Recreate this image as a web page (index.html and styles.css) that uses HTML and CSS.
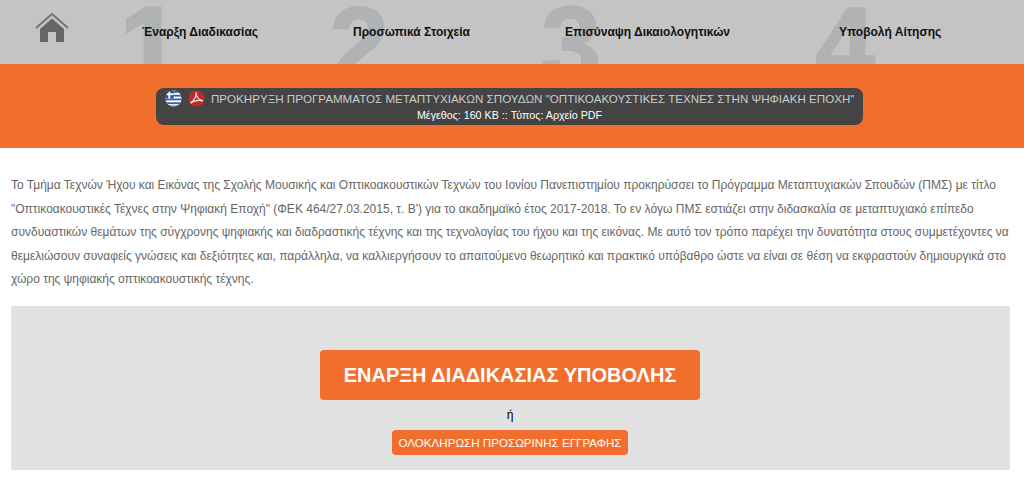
FILE: index.html
```html
<!doctype html>
<html lang="el">
<head>
    <meta charset="UTF-8"/>
    <title>Έναρξη Διαδικασίας</title>
    <link rel="stylesheet" href="styles.css">
</head>
<body>
<nav class="steps">
    <a class="home" href="#">
        <svg width="34" height="30" viewBox="0 0 34 30">
            <path d="M1 15 L17 1 L33 15" fill="none" stroke="#777" stroke-width="2"/>
            <path d="M5 16 L17 5.500 L29 16 V29 H21 V19 H13 V29 H5 Z" fill="#666"/>
        </svg>
    </a>
    <div class="step"><span class="step-num step-num-first">1</span><span class="step-label">Έναρξη Διαδικασίας</span></div>
    <div class="step"><span class="step-num">2</span><span class="step-label">Προσωπικά Στοιχεία</span></div>
    <div class="step"><span class="step-num">3</span><span class="step-label">Επισύναψη Δικαιολογητικών</span></div>
    <div class="step"><span class="step-num">4</span><span class="step-label">Υποβολή Αίτησης</span></div>
</nav>

<div class="banner">
    <div class="doc-pill">
        <div class="doc-title">
            <svg class="doc-icon" width="17" height="17" viewBox="0 0 18 18">
                <defs><clipPath id="flag-clip"><circle cx="9" cy="9" r="8.500"/></clipPath></defs>
                <g clip-path="url(#flag-clip)">
                    <rect width="18" height="18" fill="#fff"/>
                    <rect y="1" width="18" height="2" fill="#3c5fa8"/>
                    <rect y="5" width="18" height="2" fill="#3c5fa8"/>
                    <rect y="9" width="18" height="2" fill="#3c5fa8"/>
                    <rect y="13" width="18" height="2" fill="#3c5fa8"/>
                    <rect y="16.500" width="18" height="2" fill="#3c5fa8"/>
                    <rect width="9" height="9" fill="#2f4f9a"/>
                    <rect x="3.500" width="2" height="9" fill="#fff"/>
                    <rect y="3.500" width="9" height="2" fill="#fff"/>
                </g>
            </svg>
            <svg class="doc-icon" width="17" height="17" viewBox="0 0 18 18">
                <circle cx="9" cy="9" r="8.500" fill="#c22a26"/>
                <path d="M2.500 14 C6.500 11 9 6.500 8.500 2.500 C8.500 7 11 10.500 16 11.500 C11 10.500 6.500 11 2.500 14 Z" fill="none" stroke="#fbeaea" stroke-width="1.200"/>
            </svg>
            <span>ΠΡΟΚΗΡΥΞΗ ΠΡΟΓΡΑΜΜΑΤΟΣ ΜΕΤΑΠΤΥΧΙΑΚΩΝ ΣΠΟΥΔΩΝ "ΟΠΤΙΚΟΑΚΟΥΣΤΙΚΕΣ ΤΕΧΝΕΣ ΣΤΗΝ ΨΗΦΙΑΚΗ ΕΠΟΧΗ"</span>
        </div>
        <div class="doc-meta">Μέγεθος: 160 KB :: Τύπος: Αρχείο PDF</div>
    </div>
</div>

<p class="intro">Το Τμήμα Τεχνών Ήχου και Εικόνας της Σχολής Μουσικής και Οπτικοακουστικών Τεχνών του Ιονίου Πανεπιστημίου προκηρύσσει το Πρόγραμμα Μεταπτυχιακών Σπουδών (ΠΜΣ) με τίτλο "Οπτικοακουστικές Τέχνες στην Ψηφιακή Εποχή" (ΦΕΚ 464/27.03.2015, τ. Β') για το ακαδημαϊκό έτος 2017-2018. Το εν λόγω ΠΜΣ εστιάζει στην διδασκαλία σε μεταπτυχιακό επίπεδο συνδυαστικών θεμάτων της σύγχρονης ψηφιακής και διαδραστικής τέχνης και της τεχνολογίας του ήχου και της εικόνας. Με αυτό τον τρόπο παρέχει την δυνατότητα στους συμμετέχοντες να θεμελιώσουν συναφείς γνώσεις και δεξιότητες και, παράλληλα, να καλλιεργήσουν το απαιτούμενο θεωρητικό και πρακτικό υπόβαθρο ώστε να είναι σε θέση να εκφραστούν δημιουργικά στο χώρο της ψηφιακής οπτικοακουστικής τέχνης.</p>

<div class="actions">
    <a class="btn btn-large" href="#">ΕΝΑΡΞΗ ΔΙΑΔΙΚΑΣΙΑΣ ΥΠΟΒΟΛΗΣ</a>
    <div class="or">ή</div>
    <a class="btn btn-small" href="#">ΟΛΟΚΛΗΡΩΣΗ ΠΡΟΣΩΡΙΝΗΣ ΕΓΓΡΑΦΗΣ</a>
</div>
</body>
</html>
```

FILE: styles.css
```css
body {
    margin: 0;
    font-family: "Liberation Sans", Arial, sans-serif;
    color: #666;
    background: #fff;
}

.steps {
    display: grid;
    grid-template-columns: 142px 211px 212px 274px 1fr;
    height: 64px;
    background: #c4c4c4;
    overflow: hidden;
}

.home {
    padding: 13px 0 0 35px;
}

.step {
    position: relative;
    padding-top: 22px;
}

.step-num {
    position: absolute;
    top: -9px;
    left: -24px;
    font-size: 108px;
    line-height: 108px;
    font-weight: bold;
    color: #b0b2b3;
    -webkit-text-stroke: 1.500px #b0b2b3;
}

.step-num-first {
    left: -22px;
    -webkit-text-stroke-width: 3px;
}

.step-label {
    position: relative;
    font-size: 12px;
    line-height: 16px;
    font-weight: bold;
    color: #111;
}

.banner {
    display: flex;
    justify-content: center;
    padding: 24px 5px 23px 0;
    background: #f26e2c;
}

.doc-pill {
    width: 707px;
    height: 37px;
    background: #444;
    border-radius: 8px;
    text-align: center;
}

.doc-title {
    display: flex;
    align-items: center;
    gap: 6px;
    height: 21px;
    padding-left: 9px;
    font-size: 11.600px;
    white-space: nowrap;
    color: #ccc;
}

.doc-icon {
    flex: none;
}

.doc-meta {
    font-size: 10.700px;
    line-height: 13px;
    color: #fff;
}

.intro {
    margin: 26px 11px 0;
    font-size: 12px;
    line-height: 23.500px;
    color: #666;
}

.actions {
    display: flex;
    flex-direction: column;
    align-items: center;
    height: 164px;
    margin: 14px 14px 0 11px;
    padding: 44px 1px 0 0;
    box-sizing: border-box;
    background: #e2e2e2;
}

.btn {
    display: block;
    box-sizing: border-box;
    text-align: center;
    text-decoration: none;
    color: #fff;
    background: #f26e2c;
    border-radius: 4px;
}

.btn-large {
    width: 380px;
    height: 50px;
    font-size: 20px;
    line-height: 50px;
    font-weight: bold;
}

.or {
    margin: 8px 0;
    font-size: 12px;
    line-height: 14px;
    color: #000;
}

.btn-small {
    width: 236px;
    height: 25px;
    font-size: 11.600px;
    line-height: 25px;
}
```
